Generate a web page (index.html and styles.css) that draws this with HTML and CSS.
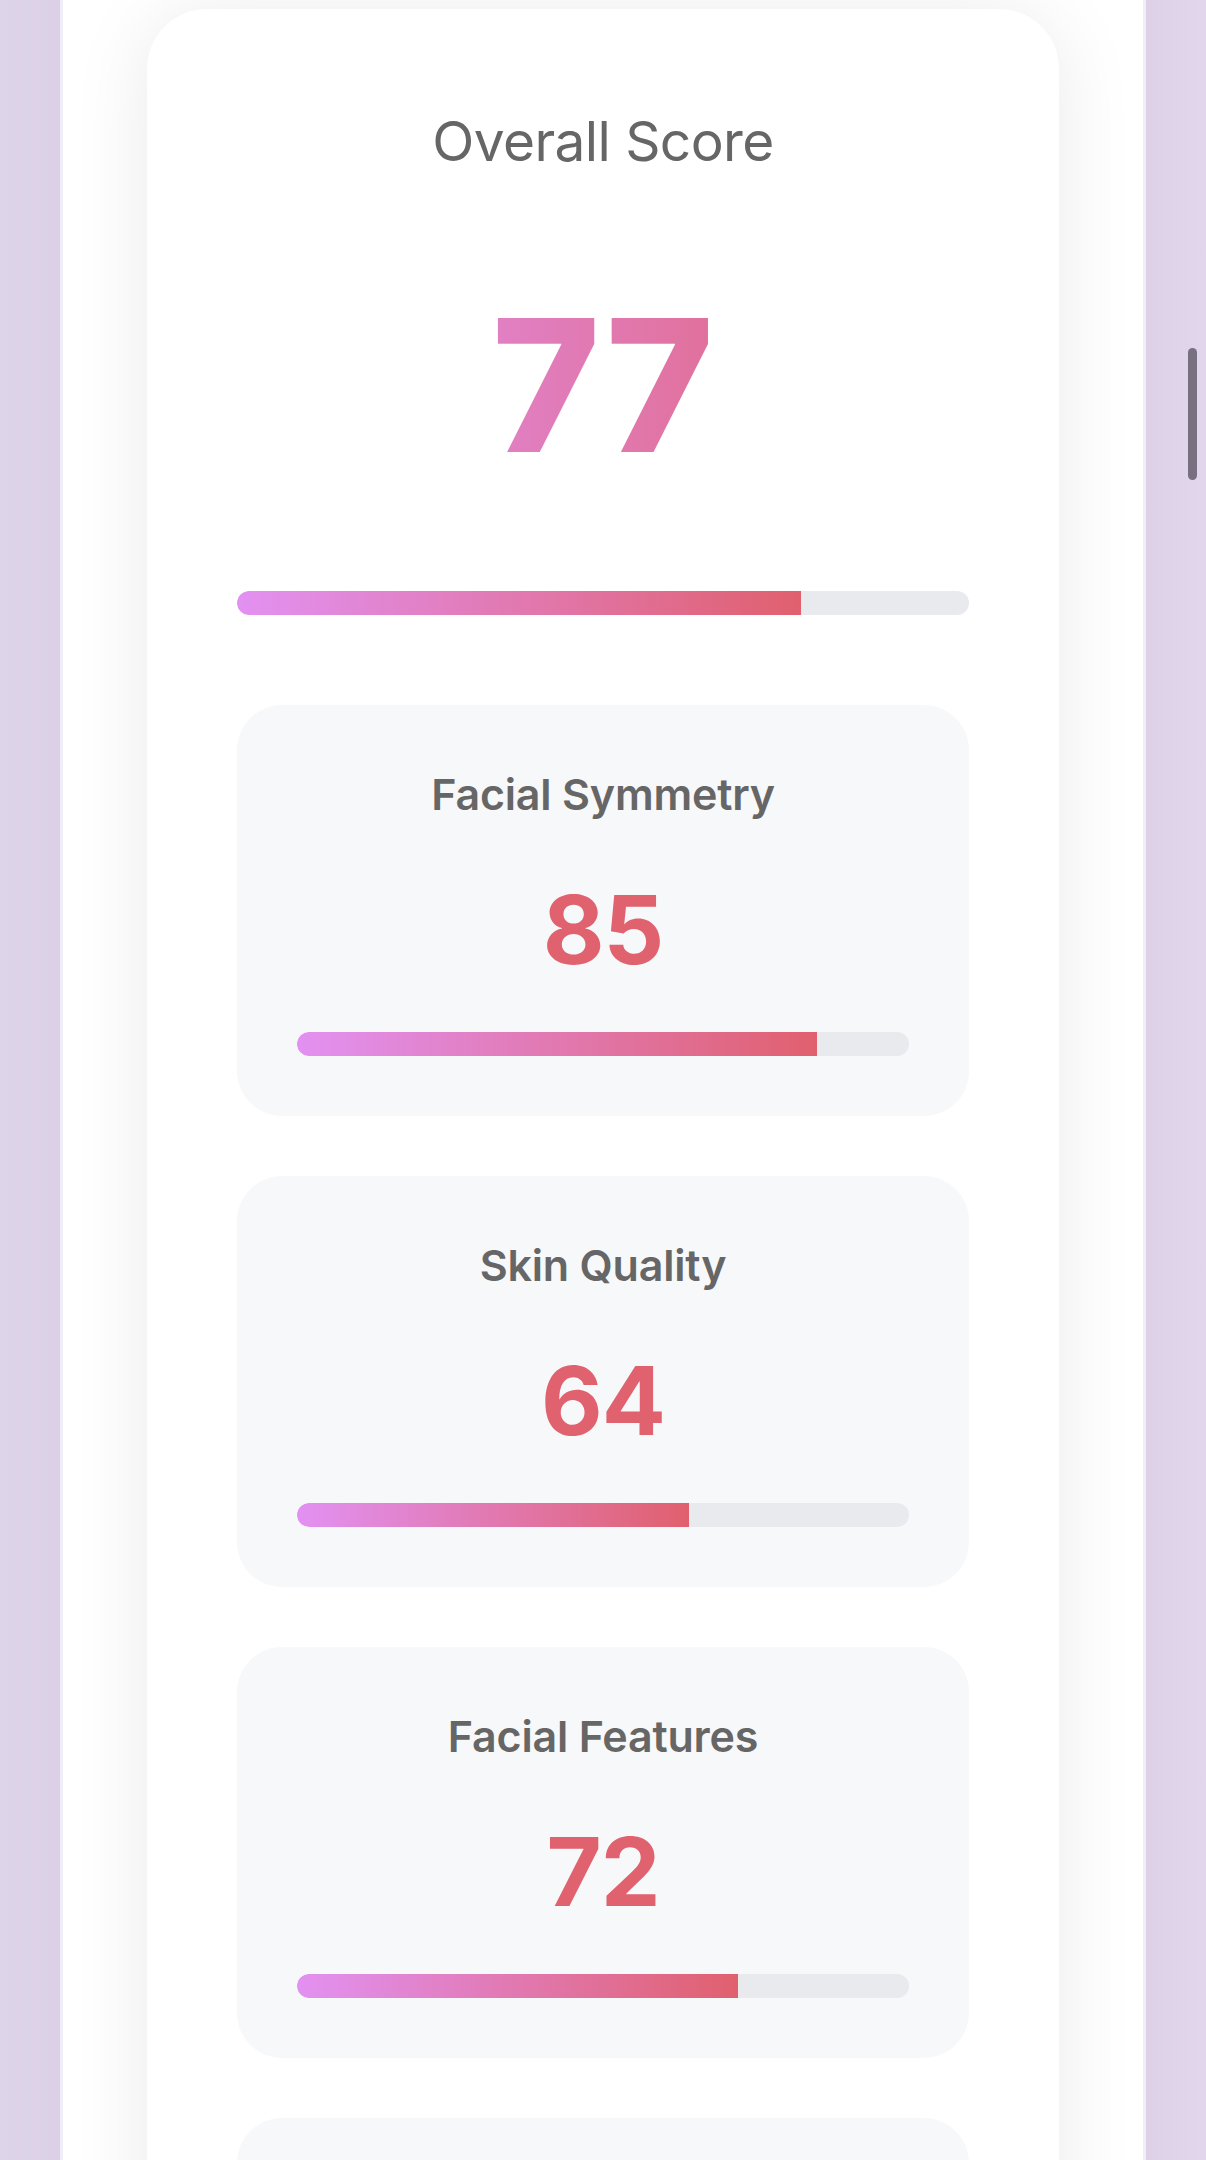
FILE: index.html
```html
<!DOCTYPE html>
<html lang="en">
<head>
<meta charset="utf-8">
<title>Overall Score</title>
<link rel="stylesheet" href="styles.css">
</head>
<body>
  <div class="screen">
    <div class="frame">
      <section class="card">
        <h2 class="card-title">Overall Score</h2>
        <div class="overall-value">77</div>
        <div class="track"><div class="fill" style="width:77%"></div></div>

        <div class="metrics">
          <div class="metric">
            <h3 class="metric-title">Facial Symmetry</h3>
            <div class="metric-value">85</div>
            <div class="track"><div class="fill" style="width:85%"></div></div>
          </div>
          <div class="metric">
            <h3 class="metric-title">Skin Quality</h3>
            <div class="metric-value">64</div>
            <div class="track"><div class="fill" style="width:64%"></div></div>
          </div>
          <div class="metric">
            <h3 class="metric-title">Facial Features</h3>
            <div class="metric-value">72</div>
            <div class="track"><div class="fill" style="width:72%"></div></div>
          </div>
          <div class="metric metric-partial"></div>
        </div>
      </section>
    </div>
  </div>
  <div class="scroll-indicator"></div>
</body>
</html>
```

FILE: styles.css
```css
html, body {
  margin: 0;
  padding: 0;
}

body {
  height: 2160px;
  overflow: hidden;
  background: linear-gradient(90deg, #ded4ea 0%, #dbd0e6 5%, #ddd2e8 50%, #ddd1e8 95%, #e1d6ec 100%);
  font-family: "Inter", "Noto Sans", "Liberation Sans", sans-serif;
}

.screen {
  padding: 0 60px;
  height: 2160px;
}

.frame {
  height: 100%;
  box-sizing: border-box;
  background: #ffffff;
  border-left: 3px solid #f1edf9;
  border-right: 3px solid #f1edf9;
  padding: 9px 84px 0;
  overflow: hidden;
}

.card {
  background: #ffffff;
  border-radius: 60px;
  padding: 90px 90px 90px;
  box-shadow: 0 6px 80px rgba(0, 0, 0, 0.085);
}

.card-title {
  margin: 0;
  text-align: center;
  font-size: 55px;
  line-height: 84px;
  font-weight: 400;
  color: #666666;
  letter-spacing: -0.6px;
}

.overall-value {
  margin-top: 110px;
  text-align: center;
  font-size: 184px;
  line-height: 1;
  font-weight: 800;
  letter-spacing: 2px;
  text-indent: 2px;
  background: linear-gradient(90deg, #e291f2, #e0606e);
  -webkit-background-clip: text;
  background-clip: text;
  color: transparent;
}

.track {
  height: 24px;
  border-radius: 12px;
  background: #e9eaee;
  overflow: hidden;
}

.card > .track {
  margin-top: 114px;
}

.fill {
  height: 100%;
  background: linear-gradient(90deg, #e291f2, #e0606e);
  border-radius: 12px 0 0 12px;
}

.metrics {
  margin-top: 90px;
  display: flex;
  flex-direction: column;
  gap: 60px;
}

.metric {
  background: #f7f8fa;
  border-radius: 45px;
  padding: 68px 60px 60px;
}

.metric-partial {
  min-height: 290px;
}

.metric-title {
  margin: 0;
  text-align: center;
  font-size: 43px;
  line-height: 1;
  font-weight: 600;
  color: #666666;
  letter-spacing: -0.2px;
}

.metric-value {
  margin-top: 66px;
  text-align: center;
  font-size: 95px;
  line-height: 1;
  font-weight: 700;
  color: #e0626f;
  letter-spacing: -1px;
}

.metric .track {
  margin-top: 55px;
}

.scroll-indicator {
  position: fixed;
  left: 1188px;
  top: 348px;
  width: 9px;
  height: 132px;
  border-radius: 5px;
  background: #786f80;
}
```
